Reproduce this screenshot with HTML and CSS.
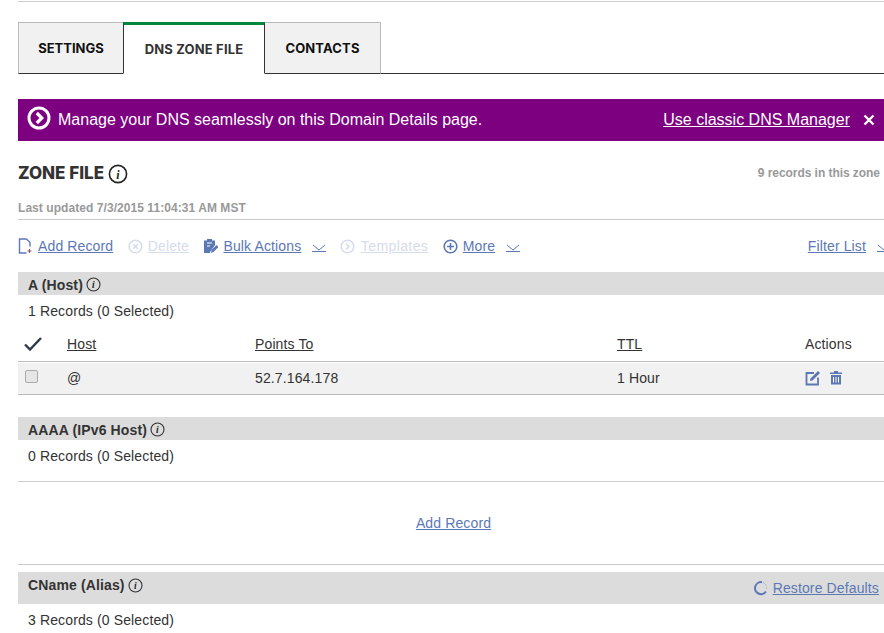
FILE: index.html
```html
<!DOCTYPE html>
<html lang="en">
<head>
    <meta charset="UTF-8">
    <title>Domain Details - DNS Zone File</title>
    <link rel="stylesheet" href="styles.css">
</head>
<body>
    <div class="page">
        <div class="top-rule"></div>

        <div class="tabs">
            <a class="tab">SETTINGS</a>
            <a class="tab active">DNS ZONE FILE</a>
            <a class="tab">CONTACTS</a>
        </div>

        <div class="banner">
            <svg class="banner-icon" width="24" height="24" viewBox="0 0 24 24">
                <circle cx="12" cy="12" r="10" fill="none" stroke="#fff" stroke-width="3"/>
                <path d="M9.8 7l5 5-5 5" fill="none" stroke="#fff" stroke-width="3.2"/>
            </svg>
            <span class="banner-text">Manage your DNS seamlessly on this Domain Details page.</span>
            <a class="banner-link">Use classic DNS Manager</a>
            <svg class="banner-close" width="12" height="12" viewBox="0 0 12 12">
                <path d="M1.5 1.5l9 9M10.5 1.5l-9 9" stroke="#fff" stroke-width="2.4"/>
            </svg>
        </div>

        <div class="zone-head">
            <h2>ZONE FILE</h2>
            <svg class="info info-lg" width="20" height="20" viewBox="0 0 20 20">
                <circle cx="10" cy="10" r="8.6" fill="none" stroke="#222" stroke-width="1.6"/>
                <text x="10" y="14.5" text-anchor="middle" class="info-i" font-size="12">i</text>
            </svg>
            <span class="zone-count">9 records in this zone</span>
        </div>
        <div class="updated">Last updated 7/3/2015 11:04:31 AM MST</div>

        <div class="toolbar">
            <span class="tool tool-add">
                <svg width="14" height="16" viewBox="0 0 14 16">
                    <path d="M8.5 1H1.5v14h7M8.5 1l3.5 3.5v4" fill="none" stroke="#5b78b5" stroke-width="1.4"/>
                    <path d="M11.5 11v4M9.5 13h4" stroke="#8a5a6a" stroke-width="1.2"/>
                </svg>
                <a>Add Record</a>
            </span>
            <span class="tool disabled">
                <svg width="15" height="15" viewBox="0 0 15 15">
                    <circle cx="7.5" cy="7.5" r="6.3" fill="none" stroke="#d5dcec" stroke-width="1.6"/>
                    <path d="M5.2 5.2l4.6 4.6M9.8 5.2l-4.6 4.6" stroke="#d5dcec" stroke-width="1.6"/>
                </svg>
                <a>Delete</a>
            </span>
            <span class="tool">
                <svg width="15" height="16" viewBox="0 0 15 16">
                    <path d="M1 2.5h3V1h5v1.5h3V7L7 14v1H1z" fill="#5b78b5"/>
                    <path d="M4 5h5M4 8h3" stroke="#fff" stroke-width="1"/>
                    <path d="M8 15l.5-3 5-5 2 2-5 5z" fill="#5b78b5"/>
                </svg>
                <a>Bulk Actions</a>
                <svg class="chevron" width="14" height="8" viewBox="0 0 14 8">
                    <path d="M1 1l6 5 6-5" fill="none" stroke="#5b78b5" stroke-width="1"/>
                    <path d="M0 7.5h14" stroke="#5b78b5" stroke-width="1"/>
                </svg>
            </span>
            <span class="tool disabled tool-templates">
                <svg width="15" height="15" viewBox="0 0 15 15">
                    <circle cx="7.5" cy="7.5" r="6.3" fill="none" stroke="#d5dcec" stroke-width="1.6"/>
                    <path d="M6 4.5l3 3-3 3" fill="none" stroke="#d5dcec" stroke-width="1.6"/>
                </svg>
                <a>Templates</a>
            </span>
            <span class="tool">
                <svg width="15" height="15" viewBox="0 0 15 15">
                    <circle cx="7.5" cy="7.5" r="6.3" fill="none" stroke="#5b78b5" stroke-width="1.6"/>
                    <path d="M4 7.5h7M7.5 4v7" stroke="#5b78b5" stroke-width="1.6"/>
                </svg>
                <a>More</a>
                <svg class="chevron" width="14" height="8" viewBox="0 0 14 8">
                    <path d="M1 1l6 5 6-5" fill="none" stroke="#5b78b5" stroke-width="1"/>
                    <path d="M0 7.5h14" stroke="#5b78b5" stroke-width="1"/>
                </svg>
            </span>
            <span class="tool filter">
                <a>Filter List</a>
                <svg class="chevron" width="14" height="8" viewBox="0 0 14 8">
                    <path d="M1 1l6 5 6-5" fill="none" stroke="#5b78b5" stroke-width="1"/>
                    <path d="M0 7.5h14" stroke="#5b78b5" stroke-width="1"/>
                </svg>
            </span>
        </div>

        <div class="section-bar">
            <span>A (Host)</span>
            <svg class="info" width="15" height="15" viewBox="0 0 15 15">
                <circle cx="7.5" cy="7.5" r="6.5" fill="none" stroke="#333" stroke-width="1.1"/>
                <text x="7.5" y="11" text-anchor="middle" class="info-i" font-size="9.5">i</text>
            </svg>
        </div>
        <div class="record-count">1 Records (0 Selected)</div>

        <div class="grid-row grid-head">
            <svg class="check" width="18" height="14" viewBox="0 0 18 14">
                <path d="M1 7.5l5 5L17 1" fill="none" stroke="#2d3a4a" stroke-width="2.4"/>
            </svg>
            <a>Host</a>
            <a>Points To</a>
            <a>TTL</a>
            <span>Actions</span>
        </div>
        <div class="grid-row grid-body">
            <span class="checkbox"></span>
            <span>@</span>
            <span>52.7.164.178</span>
            <span>1 Hour</span>
            <span class="row-actions">
                <svg width="16" height="16" viewBox="0 0 16 16">
                    <path d="M9 3H1.5v11.5H13V7.5" fill="none" stroke="#5b78b5" stroke-width="1.8"/>
                    <path d="M5.5 8.5L13 1l2 2-7.5 7.5-2.5.5z" fill="#5b78b5"/>
                </svg>
                <svg width="14" height="15" viewBox="0 0 14 15">
                    <path d="M5 1h4v1.5h4V4H1V2.5h4z" fill="#5b78b5"/>
                    <path d="M2 5h10v9.5H2z" fill="#5b78b5"/>
                    <path d="M4.5 7v5.5M7 7v5.5M9.5 7v5.5" stroke="#fff" stroke-width="1"/>
                </svg>
            </span>
        </div>

        <div class="section-bar section-gap">
            <span>AAAA (IPv6 Host)</span>
            <svg class="info" width="15" height="15" viewBox="0 0 15 15">
                <circle cx="7.5" cy="7.5" r="6.5" fill="none" stroke="#333" stroke-width="1.1"/>
                <text x="7.5" y="11" text-anchor="middle" class="info-i" font-size="9.5">i</text>
            </svg>
        </div>
        <div class="record-count">0 Records (0 Selected)</div>
        <div class="empty-add"><a>Add Record</a></div>

        <div class="section-bar section-tall">
            <span>CName (Alias)</span>
            <svg class="info" width="15" height="15" viewBox="0 0 15 15">
                <circle cx="7.5" cy="7.5" r="6.5" fill="none" stroke="#333" stroke-width="1.1"/>
                <text x="7.5" y="11" text-anchor="middle" class="info-i" font-size="9.5">i</text>
            </svg>
            <span class="restore">
                <svg width="15" height="16" viewBox="0 0 15 16">
                    <path d="M9 2.2A6 6 0 1 0 13 11.5" fill="none" stroke="#5b78b5" stroke-width="2"/>
                    <path d="M10.5 2.5l1 .8M12.5 4.5l.6 1M13.5 7.5v1" stroke="#8a9cc4" stroke-width="1"/>
                </svg>
                <a>Restore Defaults</a>
            </span>
        </div>
        <div class="record-count">3 Records (0 Selected)</div>
    </div>
</body>
</html>
```

FILE: styles.css
```css
html, body {
    margin: 0;
    height: 633px;
    overflow: hidden;
    background: white;
}
.page {
    padding-left: 18px;
    padding-top: 1px;
    font-family: "Liberation Sans", Arial, sans-serif;
    font-size: 14px;
    letter-spacing: 0.13px;
    color: #333;
}
a {
    color: #5b78b5;
    text-decoration: underline;
}
svg {
    flex: none;
}
.top-rule {
    height: 1px;
    background: #ccc;
}

/* tabs */
.tabs {
    display: flex;
    margin-top: 20px;
    height: 51px;
    border-bottom: 1px solid #333;
}
.tab {
    display: flex;
    align-items: center;
    justify-content: center;
    height: 52px;
    box-sizing: border-box;
    background: #f1f1f1;
    border: 1px solid #bbb;
    border-bottom: 1px solid #333;
    font-family: Inter, sans-serif;
    font-weight: 700;
    font-size: 13px;
    letter-spacing: 0;
    color: #111;
    text-decoration: none;
}
.tab + .tab {
    letter-spacing: 0.15px;
}
.tab:nth-child(1) {
    width: 105px;
    border-right: none;
}
.tab:nth-child(3) {
    width: 116px;
    border-left: none;
}
.tab.active {
    width: 142px;
    background: white;
    color: #333;
    border-top: 3px solid #00873c;
    border-left: 1px solid #333;
    border-right: 1px solid #333;
    border-bottom: 1px solid white;
    padding-bottom: 1px;
}

/* banner */
.banner {
    display: flex;
    align-items: center;
    height: 42px;
    margin-top: 25px;
    background: #7d0080;
    color: white;
    font-size: 16px;
    letter-spacing: 0;
}
.banner-icon {
    margin-left: 9px;
    margin-right: 7px;
    margin-top: -4px;
}
.banner-text {
    flex: 1;
    margin-top: -1px;
}
.banner-link {
    color: white;
}
.banner-close {
    margin-left: 13px;
    margin-right: 9px;
}

/* zone header */
.zone-head {
    display: flex;
    align-items: center;
    margin-top: 19px;
    height: 26px;
}
.zone-head h2 {
    margin: 0;
    font-family: Inter, sans-serif;
    font-weight: 800;
    font-size: 17px;
    letter-spacing: 0;
    color: #333;
}
.info-lg {
    margin-left: 4px;
    margin-top: 2px;
}
.info-i {
    font-family: "Liberation Serif", serif;
    font-style: italic;
    font-weight: bold;
    fill: #222;
}
.zone-count {
    margin-left: auto;
    margin-right: 4px;
    font-size: 12px;
    font-weight: bold;
    letter-spacing: -0.05px;
    color: #999;
}
.updated {
    margin-top: 15px;
    padding-bottom: 3px;
    border-bottom: 1px solid #ccc;
    font-size: 12px;
    font-weight: bold;
    letter-spacing: 0.06px;
    color: #999;
    line-height: 15px;
}

/* toolbar */
.toolbar {
    display: flex;
    align-items: center;
    height: 52px;
}
.tool {
    display: flex;
    align-items: center;
    gap: 5px;
    margin-right: 14.5px;
}
.tool-add {
    gap: 6px;
}
.tool-templates {
    gap: 6px;
    letter-spacing: 0.4px;
}
.tool .chevron {
    margin-left: 6px;
    margin-right: -1px;
    margin-top: 3px;
}
.tool.disabled a {
    color: #d5dcec;
}
.tool.filter {
    margin-left: auto;
    margin-right: -6px;
}

/* record sections */
.section-bar {
    display: flex;
    align-items: center;
    gap: 3px;
    height: 21px;
    padding-top: 2px;
    padding-left: 10px;
    background: #dcdcdc;
    font-weight: bold;
    color: #333;
}
.section-gap {
    margin-top: 22px;
}
.section-tall {
    height: 32px;
    margin-top: 7px;
    padding-top: 0;
    padding-bottom: 6px;
    box-sizing: border-box;
}
.record-count {
    padding-left: 10px;
    line-height: 32px;
}
.restore {
    display: flex;
    align-items: center;
    gap: 5px;
    margin-left: auto;
    margin-right: 5px;
    font-weight: normal;
    margin-top: 6px;
}

/* record table */
.grid-row {
    display: grid;
    grid-template-columns: 49px 188px 362px 188px 79px;
    align-items: center;
}
.grid-head {
    height: 34px;
    border-bottom: 1px solid #bbb;
}
.grid-head a {
    color: #333;
}
.grid-body {
    height: 29px;
    padding-bottom: 2px;
    background: #f1f1f1;
    border-top: 1px solid white;
    border-bottom: 1px solid #bbb;
}
.check {
    margin-left: 6px;
}
.checkbox {
    width: 11px;
    height: 11px;
    margin-left: 7px;
    margin-top: -2px;
    background: #e6e6e6;
    border: 1px solid #aaa;
    border-radius: 2px;
}
.row-actions {
    display: flex;
    align-items: center;
    gap: 8px;
}
.empty-add {
    height: 82px;
    margin-top: 9px;
    padding-left: 5px;
    border-top: 1px solid #ccc;
    border-bottom: 1px solid #ccc;
    display: flex;
    align-items: center;
    justify-content: center;
}
```
